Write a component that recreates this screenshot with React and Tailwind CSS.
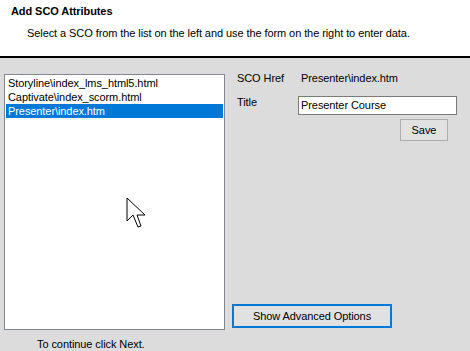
export default function App() {
  const items = [
    'Storyline\\index_lms_html5.html',
    'Captivate\\index_scorm.html',
    'Presenter\\index.htm',
  ];
  const selected = 2;

  return (
    <div className="w-[470px] h-[351px] overflow-hidden bg-[#dcdcdc] text-black text-[11px] leading-[13px] tracking-[-0.08px] font-['Liberation_Sans',Arial,sans-serif]">
      {/* Header */}
      <div className="h-[58px] bg-white border-b-2 border-black pt-[5px]">
        <div className="pl-[11px] font-bold">Add SCO Attributes</div>
        <div className="pl-[27px] mt-[9px]">
          Select a SCO from the list on the left and use the form on the right to enter data.
        </div>
      </div>

      {/* Body */}
      <div className="flex pt-[14px]">
        <div className="relative mt-[2px] ml-[4px] w-[221px] h-[256px] border border-[#828790] bg-white p-[1px]">
          {items.map((item, i) => (
            <div
              key={item}
              className={
                i === selected
                  ? 'h-[14px] leading-[14px] pl-[2px] bg-[#0078d7] text-white'
                  : 'h-[14px] leading-[14px] pl-[2px]'
              }
            >
              {item}
            </div>
          ))}
          {/* Mouse pointer */}
          <svg
            className="absolute left-[121px] top-[122px]"
            width="20"
            height="32"
            viewBox="0 0 20 32"
          >
            <polygon
              points="1,1 1,24 7,18 12,30 15,29 11,18 19,18"
              fill="white"
              stroke="black"
              strokeWidth="1"
              strokeLinejoin="miter"
            />
          </svg>
        </div>

        <div className="flex-1 flex flex-col h-[258px]">
          <div className="flex pl-[12px]">
            <div className="w-[64px]">SCO Href</div>
            <div>Presenter\index.htm</div>
          </div>
          <div className="flex pl-[12px] mt-[11px]">
            <div className="w-[61px]">Title</div>
            <div className="w-[159px] h-[19px] border border-[#7a7a7a] bg-white px-[2px] leading-[17px]">
              Presenter Course
            </div>
          </div>
          <div className="mt-[4px] ml-[175px] w-[48px] h-[22px] border border-[#adadad] bg-[#e1e1e1] flex items-center justify-center">
            Save
          </div>
          <div className="mt-auto mb-[2px] ml-[7px] w-[160px] h-[24px] border-2 border-[#0078d7] bg-[#e1e1e1] flex items-center justify-center">
            Show Advanced Options
          </div>
        </div>
      </div>

      <div className="pl-[37px] mt-[8px]">To continue click Next.</div>
    </div>
  );
}
